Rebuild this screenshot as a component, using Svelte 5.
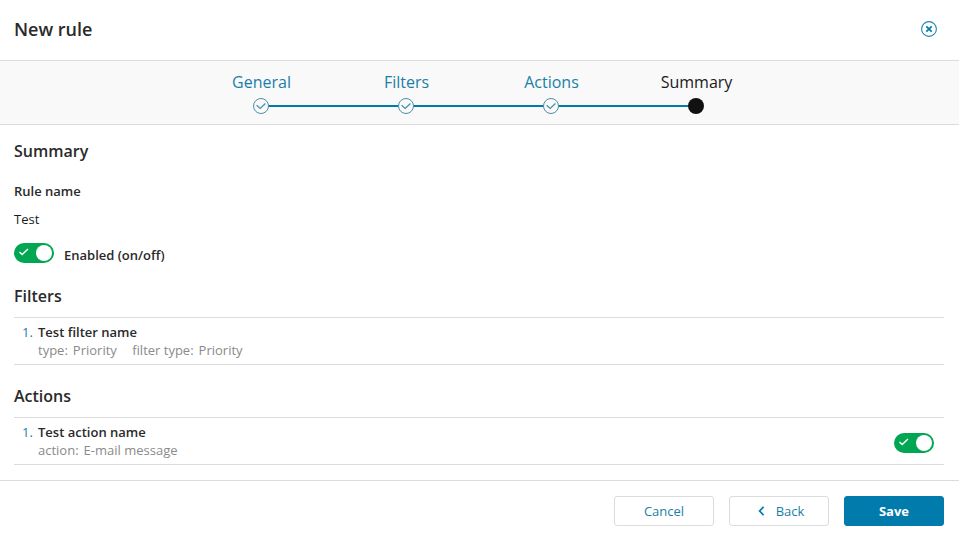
<script>
    const steps = [
        { name: 'General', done: true },
        { name: 'Filters', done: true },
        { name: 'Actions', done: true },
        { name: 'Summary', done: false }
    ];
</script>

<div class="dialog">
    <header class="top">
        <h1>New rule</h1>
        <button class="close" aria-label="Close">
            <svg width="16" height="16" viewBox="0 0 16 16" fill="none">
                <circle cx="8" cy="8" r="7.4" stroke="#1a86b4" stroke-width="1.1" />
                <path d="M5.3 5.3l5.4 5.4M10.7 5.3l-5.4 5.4" stroke="#007bac" stroke-width="1.7" />
            </svg>
        </button>
    </header>

    <nav class="stepper">
        {#each steps as step, i}
            <div class="step" class:done={step.done}>
                <span class="label">{step.name}</span>
                <span class="dot-row">
                    {#if i < steps.length - 1}
                        <span class="line"></span>
                    {/if}
                    {#if step.done}
                        <svg class="dot" width="16" height="16" viewBox="0 0 16 16" fill="none">
                            <circle cx="8" cy="8" r="7.5" fill="#f9f9f9" stroke="#4a8fa8" />
                            <path d="M3.6 7.2l3.6 3.2 5.2-4.8" stroke="#4a8fa8" stroke-width="1.3" />
                        </svg>
                    {:else}
                        <span class="dot current"></span>
                    {/if}
                </span>
            </div>
        {/each}
    </nav>

    <main class="content">
        <h2 class="first">Summary</h2>
        <div class="field-label">Rule name</div>
        <div class="field-value">Test</div>
        <div class="enabled">
            <span class="toggle">
                <svg width="12" height="10" viewBox="0 0 12 10" fill="none">
                    <path d="M1.5 5l2.7 2.5L10 2" stroke="#fff" stroke-width="1.4" />
                </svg>
                <span class="knob"></span>
            </span>
            <span class="enabled-text">Enabled (on/off)</span>
        </div>

        <h2 class="filters">Filters</h2>
        <div class="item">
            <span class="num">1.</span>
            <div class="body">
                <div class="name">Test filter name</div>
                <div class="meta">
                    <span>type:</span><span class="val">Priority</span>
                    <span class="next">filter type:</span><span class="val">Priority</span>
                </div>
            </div>
        </div>

        <h2 class="actions">Actions</h2>
        <div class="item">
            <span class="num">1.</span>
            <div class="body">
                <div class="name">Test action name</div>
                <div class="meta">
                    <span>action:</span><span class="val">E-mail message</span>
                </div>
            </div>
            <span class="toggle item-toggle">
                <svg width="12" height="10" viewBox="0 0 12 10" fill="none">
                    <path d="M1.5 5l2.7 2.5L10 2" stroke="#fff" stroke-width="1.4" />
                </svg>
                <span class="knob"></span>
            </span>
        </div>
    </main>

    <footer class="bottom">
        <button class="btn">Cancel</button>
        <button class="btn back-btn">
            <svg width="7" height="10" viewBox="0 0 7 10" fill="none">
                <path d="M5.6 .9L1.6 5l4 4.1" stroke="#007bac" stroke-width="1.7" />
            </svg>
            <span class="back">Back</span>
        </button>
        <button class="btn primary">Save</button>
    </footer>
</div>

<style>
    :global(body) {
        background: #fff;
    }

    .dialog {
        width: 959px;
        height: 540px;
        display: flex;
        flex-direction: column;
        font-family: "Open Sans", sans-serif;
        font-size: 13px;
        color: #1a1a1a;
    }

    .top {
        height: 60px;
        display: flex;
        align-items: center;
        justify-content: space-between;
        padding: 0 22px 2px 14px;
        box-sizing: border-box;
        flex: none;
    }

    h1 {
        margin: 0;
        font-size: 18px;
        font-weight: 600;
        color: #2a2a2a;
    }

    .close {
        border: none;
        background: none;
        padding: 0;
        height: 16px;
        display: block;
    }

    .stepper {
        height: 65px;
        box-sizing: border-box;
        flex: none;
        background: #f9f9f9;
        border-top: 1px solid #dcdcdc;
        border-bottom: 1px solid #dcdcdc;
        display: flex;
        justify-content: center;
        padding-left: 1px;
        padding-right: 2px;
    }

    .step {
        width: 145px;
        display: flex;
        flex-direction: column;
        align-items: center;
    }

    .label {
        font-size: 16px;
        line-height: 22px;
        margin-top: 10px;
        color: #1a1a1a;
    }

    .step.done .label {
        color: #1a7fa8;
    }

    .dot-row {
        position: relative;
        display: block;
        width: 16px;
        height: 16px;
        margin: 5px 0 0 -2px;
    }

    .line {
        position: absolute;
        left: 8px;
        top: 7px;
        width: 145px;
        height: 2px;
        background: #007bac;
    }

    .dot {
        position: relative;
        display: block;
    }

    .dot.current {
        width: 16px;
        height: 16px;
        border-radius: 50%;
        background: #111;
    }

    .content {
        flex: 1;
        padding: 0 15px 0 14px;
    }

    h2 {
        margin: 0;
        font-size: 16px;
        font-weight: 600;
        line-height: 22px;
        color: #2a2a2a;
    }

    h2.first {
        margin-top: 15px;
    }

    .field-label {
        margin-top: 20px;
        font-weight: 600;
        line-height: 18px;
        color: #2a2a2a;
    }

    .field-value {
        margin-top: 10px;
        line-height: 18px;
    }

    .enabled {
        margin-top: 15px;
        display: flex;
        align-items: center;
    }

    .enabled-text {
        margin-left: 10px;
        font-weight: 600;
        position: relative;
        top: 2px;
        color: #2a2a2a;
    }

    .toggle {
        width: 40px;
        height: 20px;
        border-radius: 10px;
        background: #00a651;
        display: flex;
        align-items: center;
        justify-content: space-between;
        padding: 0 2px 0 4px;
        box-sizing: border-box;
        flex: none;
    }

    .toggle svg {
        margin-top: -3px;
    }

    .knob {
        width: 16px;
        height: 16px;
        border-radius: 50%;
        background: #fff;
    }

    h2.filters {
        margin-top: 22px;
        padding-bottom: 10px;
        border-bottom: 1px solid #dcdcdc;
    }

    h2.actions {
        margin-top: 20px;
        padding-bottom: 10px;
        border-bottom: 1px solid #dcdcdc;
    }

    .item {
        display: flex;
        align-items: center;
        height: 46px;
        border-bottom: 1px solid #dcdcdc;
        padding: 0 10px 0 8px;
    }

    .num {
        color: #1a7fa8;
        width: 16px;
        flex: none;
        align-self: flex-start;
        margin-top: 6px;
        line-height: 17px;
    }

    .body {
        flex: 1;
        align-self: flex-start;
        margin-top: 6px;
    }

    .name {
        font-weight: 600;
        line-height: 17px;
        color: #2a2a2a;
    }

    .meta {
        margin-top: 1px;
        color: #8a8a8a;
        line-height: 17px;
    }

    .val {
        margin-left: 5px;
    }

    .next {
        margin-left: 12px;
    }

    .item-toggle {
        margin-top: 4px;
    }

    .bottom {
        height: 60px;
        box-sizing: border-box;
        flex: none;
        border-top: 1px solid #dcdcdc;
        display: flex;
        justify-content: flex-end;
        gap: 15px;
        padding: 15px 15px 0 0;
    }

    .btn {
        width: 100px;
        height: 30px;
        box-sizing: border-box;
        border: 1px solid #dcdcdc;
        border-radius: 3px;
        background: #fff;
        color: #1a7fa8;
        font-family: inherit;
        font-size: 13px;
        display: flex;
        align-items: center;
        justify-content: center;
    }

    .back-btn {
        padding-left: 10px;
    }

    .back {
        margin-left: 11px;
    }

    .primary {
        background: #007bac;
        border-color: #007bac;
        color: #fff;
        font-weight: 700;
    }
</style>
